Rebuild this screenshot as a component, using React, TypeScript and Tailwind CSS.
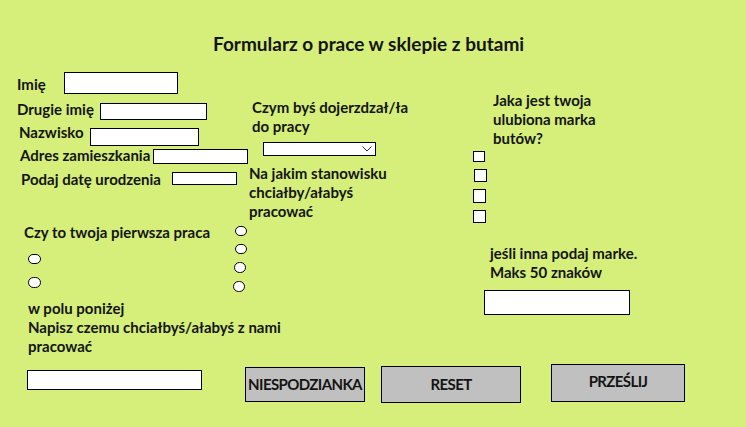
import React from "react";

const Label = ({ children, className = "" }: { children: React.ReactNode; className?: string }) => (
  <div className={`shrink-0 text-[15px] font-bold leading-[16px] whitespace-nowrap text-[#141414] ${className}`}>{children}</div>
);

const Box = ({ className }: { className: string }) => <div className={`shrink-0 border border-black bg-white ${className}`} />;

const Radio = ({ className }: { className: string }) => (
  <div className={`h-[10px] w-[12px] rounded-full border border-black bg-white ${className}`} />
);

export default function App() {
  return (
    <div className="h-[427px] w-[746px] overflow-hidden bg-[#d5ef7a] font-['Lato',sans-serif] text-[#141414]">
      <div className="h-[60px] pl-[213px] pt-[32px]">
        <div className="text-[19px] font-bold leading-[24px]">Formularz o prace w sklepie z butami</div>
      </div>

      <div className="flex h-[300px]">
        {/* left column */}
        <div className="w-[234px] shrink-0">
          <div className="ml-[17px] mt-[12px] flex items-start">
            <Label className="mt-[4px] w-[47px]">Imię</Label>
            <Box className="h-[22px] w-[114px]" />
          </div>
          <div className="ml-[17px] mt-[7px] flex items-start">
            <Label className="w-[83px]">Drugie imię</Label>
            <Box className="mt-[2px] h-[17px] w-[107px]" />
          </div>
          <div className="ml-[19px] mt-[4px] flex items-start">
            <Label className="w-[71px]">Nazwisko</Label>
            <Box className="mt-[4px] h-[18px] w-[109px]" />
          </div>
          <div className="ml-[20px] mt-[1px] flex items-start">
            <Label className="w-[133px]">Adres zamieszkania</Label>
            <Box className="mt-[2px] h-[15px] w-[95px]" />
          </div>
          <div className="ml-[21px] mt-[7px] flex items-start">
            <Label className="w-[151px]">Podaj datę urodzenia</Label>
            <Box className="mt-[1px] h-[13px] w-[65px]" />
          </div>

          <Label className="ml-[24px] mt-[37px]">Czy to twoja pierwsza praca</Label>
          <Radio className="ml-[28px] mt-[14px] h-[10px] w-[13px]" />
          <Radio className="ml-[28px] mt-[13px] h-[11px] w-[13px]" />

          <div className="ml-[28px] mt-[11px] text-[15px] font-bold leading-[19px] whitespace-nowrap">
            w polu poniżej
            <br />
            Napisz czemu chciałbyś/ałabyś z nami
            <br />
            pracować
          </div>
        </div>

        {/* middle column */}
        <div className="w-[236px] shrink-0">
          <div className="ml-[18px] mt-[38px] text-[15px] font-bold leading-[19px] whitespace-nowrap">
            Czym byś dojerzdzał/ła
            <br />
            do pracy
          </div>
          <div className="ml-[29px] mt-[6px] flex h-[14px] w-[113px] items-center justify-end border border-black bg-white pr-[3px]">
            <svg width="10" height="6" viewBox="0 0 10 6">
              <polyline points="0.5,0.5 5,5 9.5,0.5" fill="none" stroke="#333" strokeWidth="1" />
            </svg>
          </div>
          <div className="ml-[15px] mt-[8px] text-[15px] font-bold leading-[19px] whitespace-nowrap">
            Na jakim stanowisku
            <br />
            chciałby/ałabyś
            <br />
            pracować
          </div>
          <Radio className="ml-[1px] mt-[5px]" />
          <Radio className="ml-[1px] mt-[8px]" />
          <Radio className="ml-[0px] mt-[8px] h-[11px]" />
          <Radio className="-ml-[1px] mt-[8px] h-[11px]" />
        </div>

        {/* right column */}
        <div className="w-[276px] shrink-0">
          <div className="ml-[23px] mt-[31px] text-[15px] font-bold leading-[19px] whitespace-nowrap">
            Jaka jest twoja
            <br />
            ulubiona marka
            <br />
            butów?
          </div>
          <Box className="ml-[3px] mt-[3px] h-[11px] w-[12px]" />
          <Box className="ml-[4px] mt-[7px] h-[13px] w-[13px]" />
          <Box className="ml-[3px] mt-[7px] h-[14px] w-[13px]" />
          <Box className="ml-[3px] mt-[7px] h-[13px] w-[13px]" />
          <div className="ml-[20px] mt-[21px] text-[15px] font-bold leading-[19px] whitespace-nowrap">
            jeśli inna podaj marke.
            <br />
            Maks 50 znaków
          </div>
          <Box className="ml-[14px] mt-[8px] h-[25px] w-[146px]" />
        </div>
      </div>

      {/* bottom row */}
      <div className="flex items-start">
        <Box className="ml-[27px] mt-[10px] h-[20px] w-[175px]" />
        <button className="ml-[43px] mt-[7px] flex h-[35px] w-[120px] items-center justify-center border border-black bg-[#c0c0c0] text-[15px] font-bold tracking-[-0.6px]">
          NIESPODZIANKA
        </button>
        <button className="ml-[16px] mt-[6px] flex h-[37px] w-[140px] items-center justify-center border border-black bg-[#c0c0c0] text-[15px] font-bold tracking-[-0.6px]">
          RESET
        </button>
        <button className="ml-[30px] mt-[4px] flex h-[38px] w-[134px] items-center justify-center border border-black bg-[#c0c0c0] pb-[3px] text-[15px] font-bold tracking-[-0.6px]">
          PRZEŚLIJ
        </button>
      </div>
    </div>
  );
}
